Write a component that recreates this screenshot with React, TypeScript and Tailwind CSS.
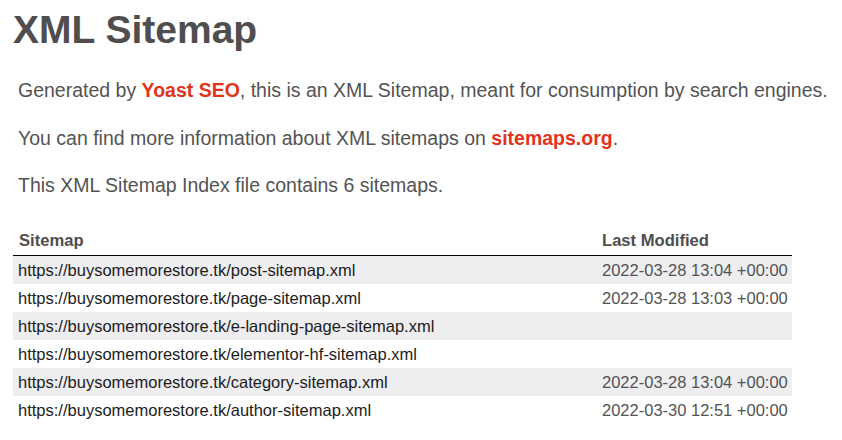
import React from "react";

const rows: { url: string; date: string }[] = [
  { url: "https://buysomemorestore.tk/post-sitemap.xml", date: "2022-03-28 13:04 +00:00" },
  { url: "https://buysomemorestore.tk/page-sitemap.xml", date: "2022-03-28 13:03 +00:00" },
  { url: "https://buysomemorestore.tk/e-landing-page-sitemap.xml", date: "" },
  { url: "https://buysomemorestore.tk/elementor-hf-sitemap.xml", date: "" },
  { url: "https://buysomemorestore.tk/category-sitemap.xml", date: "2022-03-28 13:04 +00:00" },
  { url: "https://buysomemorestore.tk/author-sitemap.xml", date: "2022-03-30 12:51 +00:00" },
];

export default function App() {
  return (
    <div className="w-[842px] h-[440px] bg-white overflow-hidden text-[#545353] font-['Liberation_Sans',Arial,sans-serif]">
      <div className="pl-[13px]">
        <h1 className="mt-[10px] text-[39px] leading-[39px] font-bold text-[#4f4d4e]">XML Sitemap</h1>
        <div className="pl-[5px] text-[19.5px] leading-[24px]">
          <p className="mt-[29px]">
            Generated by <a className="font-bold text-[#e1341c]">Yoast SEO</a>, this is an XML Sitemap, meant for consumption by search engines.
          </p>
          <p className="mt-[23.5px]">
            You can find more information about XML sitemaps on <a className="font-bold text-[#e1341c]">sitemaps.org</a>.
          </p>
          <p className="mt-[23.5px]">This XML Sitemap Index file contains 6 sitemaps.</p>
        </div>
        <table className="mt-[33.5px] w-[779px] table-fixed border-collapse">
          <colgroup>
            <col className="w-[584px]" />
            <col className="w-[195px]" />
          </colgroup>
          <thead>
            <tr className="border-b border-black">
              <th className="text-left pl-[6px] pb-[4.5px] text-[16.6px] leading-[20px] font-bold text-[#4f4d4e]">Sitemap</th>
              <th className="text-left pl-[5px] pb-[4.5px] text-[16.6px] leading-[20px] font-bold text-[#4f4d4e]">Last Modified</th>
            </tr>
          </thead>
          <tbody>
            {rows.map((r, i) => (
              <tr key={r.url} className={i % 2 === 0 ? "bg-[#eeedf0]" : "bg-white"}>
                <td className="pl-[5px] text-[16.5px] leading-[28px] text-[#1c1c1c] whitespace-nowrap">{r.url}</td>
                <td className="pl-[5px] text-[16.5px] leading-[28px] text-[#545353] whitespace-nowrap">{r.date}</td>
              </tr>
            ))}
          </tbody>
        </table>
      </div>
    </div>
  );
}
